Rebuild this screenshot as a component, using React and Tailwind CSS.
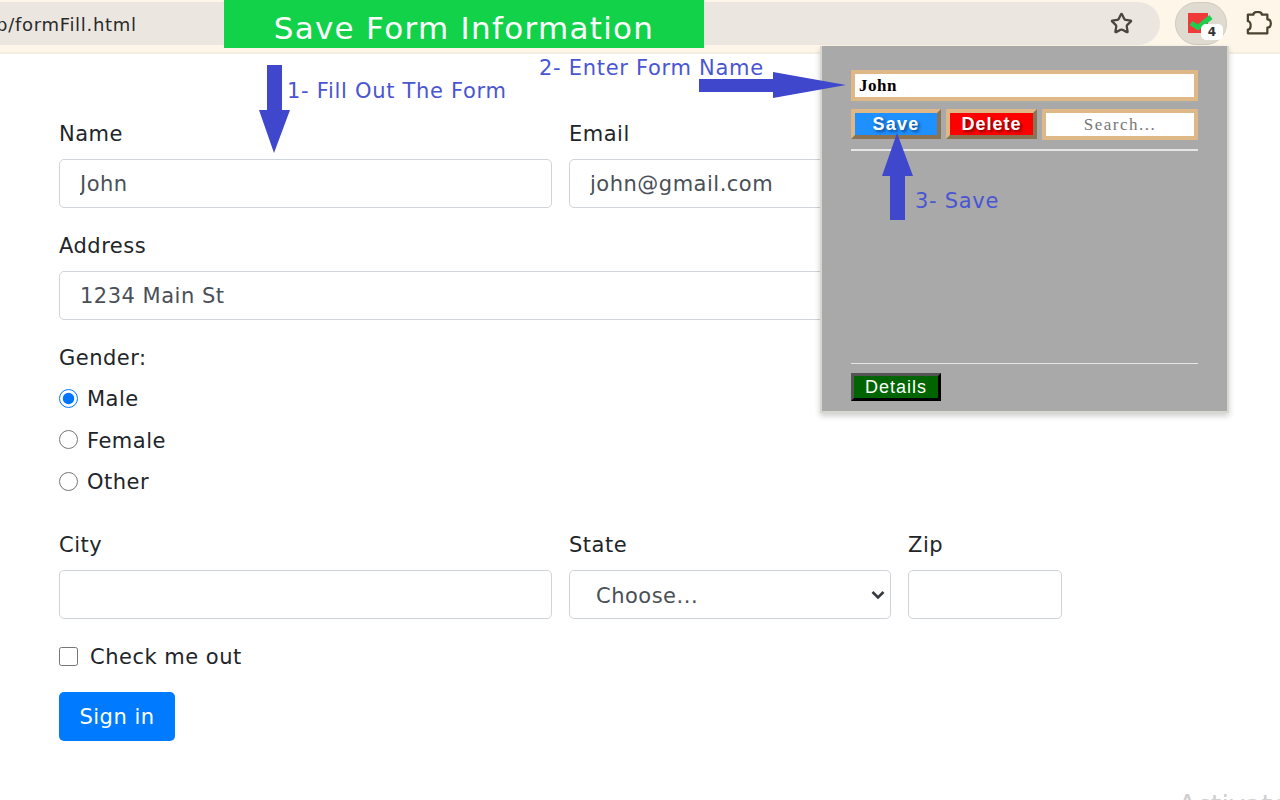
import React from "react";
import { Star } from "lucide-react";

const inputCls =
  "block h-[49px] w-full rounded-[5px] border border-[#ced4da] bg-white px-[20px] pt-[1px] text-[21px] tracking-[0.5px] text-[#495057] outline-none";
const labelCls = "block h-[30px] leading-[32px] text-[21px] tracking-[0.5px] text-[#212529]";

function Field({ label, value, className = "" }) {
  return (
    <div className={className}>
      <label className={labelCls + " mb-[11px]"}>{label}</label>
      <input className={inputCls} defaultValue={value} readOnly />
    </div>
  );
}

function Radio({ label, checked }) {
  return (
    <label className="flex h-[30px] items-center text-[21px] leading-[30px] tracking-[0.5px] text-[#212529]">
      <input type="radio" name="gender" defaultChecked={checked} className="m-0 h-[19px] w-[19px] accent-[#0075ff]" />
      <span className="ml-[9px] pt-[2px]">{label}</span>
    </label>
  );
}

function Toolbar() {
  return (
    <div className="flex h-[54px] items-start border-b-2 border-[#f5eee0] bg-[#fdf6e9] pt-[2px]">
      <div className="flex h-[43px] w-[1160px] items-center justify-end rounded-r-[22px] bg-[#ebe7e0] pr-[27px]">
        <Star size={23} strokeWidth={2.4} className="text-[#4a453d]" />
      </div>
      <div className="relative ml-[15px] h-[43px] w-[52px] rounded-[22px] border border-[#cfcabd] bg-[#dfdbd0]">
        <svg width="28" height="24" viewBox="0 0 28 24" className="absolute left-[12px] top-[10px]">
          <rect x="0" y="0" width="20" height="20" fill="#f03a3a" />
          <path d="M3 10 L10 14.5 L23 4" fill="none" stroke="#1fce4f" strokeWidth="5" />
        </svg>
        <span className="absolute left-[25px] top-[21px] flex h-[16px] w-[22px] items-center justify-center rounded-[5px] bg-white text-[12px] font-bold text-[#333]">
          4
        </span>
      </div>
      <svg width="26" height="26" viewBox="0 0 28 28" className="ml-[19px] mt-[9px]" fill="none" stroke="#4a4330" strokeWidth="2.4" strokeLinejoin="round">
        <path d="M2 4 H8 C8 0 17 0 17 4 H23 V9 C28 9 28 18 23 18 V24 H2 V20 C6 20 6 11 2 11 Z" />
      </svg>
    </div>
  );
}

function Popup() {
  return (
    <div className="absolute left-[820px] top-[46px] flex h-[367px] w-[409px] flex-col border-b-2 border-l-2 border-r-2 border-[#d6d8d0] bg-[#a9a9a9] px-[29px] pb-[10px] pt-[24px] font-['Liberation_Serif',serif] shadow-[0_3px_6px_rgba(0,0,0,0.2)]">
      <input
        readOnly
        defaultValue="John"
        className="h-[31px] w-full border-4 border-[#deb887] bg-white px-[4px] text-[17px] font-bold tracking-[0.5px] text-black outline-none"
      />
      <div className="mt-[8px] flex items-start gap-[5px]">
        <button className="h-[30px] w-[90px] border-4 border-[#deb887] bg-[#1e90ff] font-['Liberation_Sans',sans-serif] text-[18px] font-bold leading-none tracking-[1.2px] text-white [border-style:outset] [text-shadow:2px_2px_3px_#0a4a90]">
          Save
        </button>
        <button className="h-[30px] w-[91px] border-4 border-[#deb887] bg-[#ff0000] font-['Liberation_Sans',sans-serif] text-[18px] font-bold leading-none tracking-[1px] text-white [border-style:outset] [text-shadow:2px_2px_3px_#700000]">
          Delete
        </button>
        <input
          readOnly
          placeholder="Search..."
          className="h-[31px] w-[156px] border-4 border-[#deb887] bg-white text-center text-[17px] tracking-[1.5px] outline-none placeholder:text-[#777]"
        />
      </div>
      <div className="mt-[9px] h-[1.5px] bg-[#e6e6e6]" />
      <div className="flex-1" />
      <div className="h-[1.5px] bg-[#e6e6e6]" />
      <button className="mt-[9px] h-[28px] w-[90px] border-[3px] border-[#000] bg-[#006400] font-['Liberation_Sans',sans-serif] text-[18px] leading-none tracking-[1px] text-white [border-style:outset]">
        Details
      </button>
    </div>
  );
}

function Annotations() {
  const note = "absolute whitespace-nowrap text-[21px] tracking-[0.7px] leading-[30px] text-[#4a55d2]";
  return (
    <>
      <div className="absolute left-[224px] top-0 flex h-[48px] w-[480px] items-center justify-center bg-[#12d24a] pt-[9px] text-[31px] tracking-[1.3px] text-white">
        Save Form Information
      </div>
      <svg className="absolute left-0 top-0" width="1280" height="230" fill="#3f48cc">
        <path d="M267 65 H282 V110 H290 L274 153 L259 110 H267 Z" />
        <path d="M699 79 H773 V72 L846 85 L773 98 V92 H699 Z" />
        <path d="M890 220 V176 H882 L897 133 L913 176 H905 V220 Z" />
      </svg>
      <div className={note + " left-[287px] top-[76px]"}>1- Fill Out The Form</div>
      <div className={note + " left-[539px] top-[53px]"}>2- Enter Form Name</div>
      <div className={note + " left-[915px] top-[186px]"}>3- Save</div>
    </>
  );
}

export default function App() {
  return (
    <div className="relative h-[800px] w-[1280px] overflow-hidden bg-white font-['DejaVu_Sans',sans-serif]">
      <Toolbar />
      <div className="absolute left-0 top-[14px] -ml-[4px] text-[18px] leading-[22px] tracking-[0.7px] text-[#2a2a2a]">p/formFill.html</div>
      <form className="ml-[59px] w-[1003px] pt-[64px]">
        <div className="flex gap-[17px]">
          <Field label="Name" value="John" className="w-[493px]" />
          <Field label="Email" value="john@gmail.com" className="w-[493px]" />
        </div>
        <Field label="Address" value="1234 Main St" className="mt-[22px]" />
        <div className={labelCls + " mt-[22px]"}>Gender:</div>
        <div className="mt-[11px] flex flex-col gap-[11.5px]">
          <Radio label="Male" checked />
          <Radio label="Female" />
          <Radio label="Other" />
        </div>
        <div className="mt-[33px] flex gap-[17px]">
          <Field label="City" className="w-[493px]" />
          <div className="w-[322px]">
            <label className={labelCls + " mb-[11px]"}>State</label>
            <div className="relative">
              <select className={inputCls + " appearance-none pl-[26px] pr-[6px] pt-[5px]"} defaultValue="c">
                <option value="c">Choose...</option>
              </select>
              <svg width="14" height="10" viewBox="0 0 14 10" className="absolute right-[6px] top-[20px]" fill="none" stroke="#343a40" strokeWidth="2.6">
                <path d="M1.5 2 L7 7.5 L12.5 2" />
              </svg>
            </div>
          </div>
          <Field label="Zip" className="w-[154px]" />
        </div>
        <label className="mt-[22px] flex h-[30px] items-center text-[21px] tracking-[0.5px] text-[#212529]">
          <input type="checkbox" className="m-0 h-[19px] w-[19px]" />
          <span className="ml-[12px] pt-[3px]">Check me out</span>
        </label>
        <button type="button" className="mt-[21px] h-[49px] w-[116px] rounded-[5px] bg-[#007bff] pt-[3px] text-[21px] tracking-[0.5px] text-white">
          Sign in
        </button>
      </form>
      <Popup />
      <Annotations />
      <div className="absolute left-[1178px] top-[790px] whitespace-nowrap text-[27px] leading-[30px] text-[#d0d0d0]">Activate Windows</div>
    </div>
  );
}
